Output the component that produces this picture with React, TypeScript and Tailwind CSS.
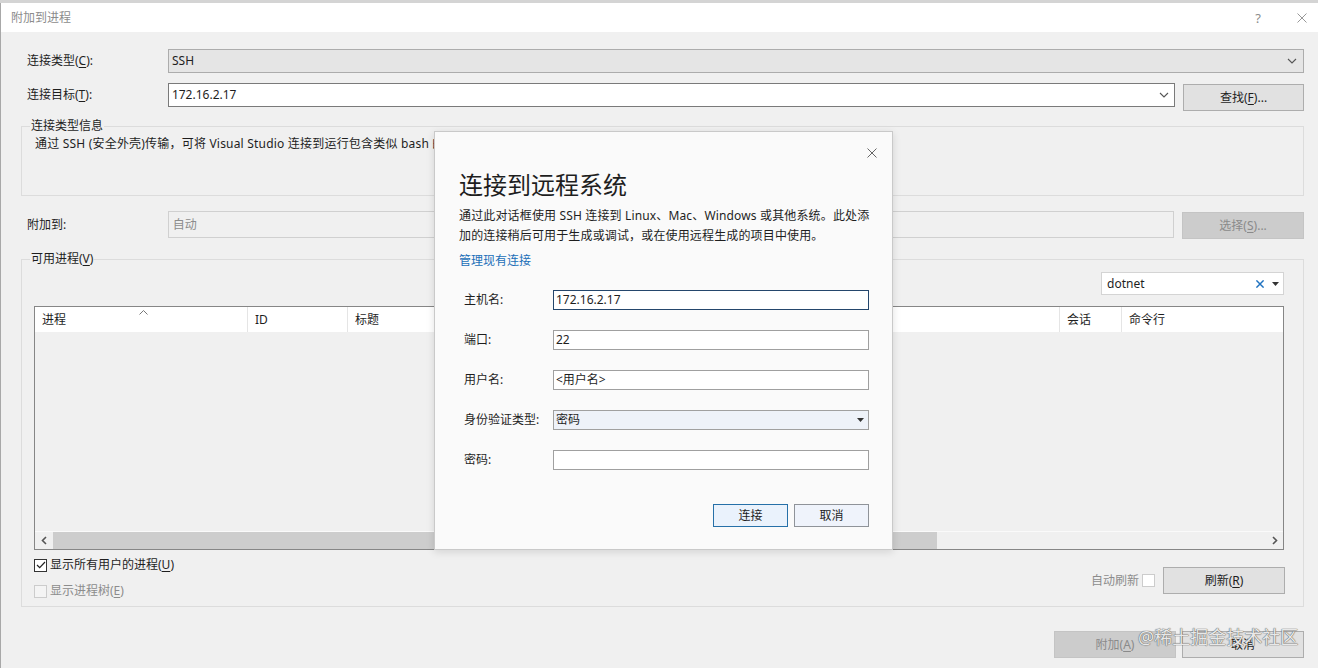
import React from "react";

// Access-key letter, underlined like a WinForms label
function K({ children }: { children: string }) {
  return <span className="underline underline-offset-[2px] decoration-[1px]">{children}</span>;
}

function ChevronDown({ color = "#555" }: { color?: string }) {
  return (
    <svg width="10" height="6" viewBox="0 0 10 6" fill="none" stroke={color} strokeWidth="1.1">
      <path d="M1 1l4 4 4-4" />
    </svg>
  );
}

function CaretDown() {
  return (
    <svg width="7" height="4" viewBox="0 0 7 4" fill="#333">
      <path d="M0 0h7L3.5 4z" />
    </svg>
  );
}

function Cross({ size = 10, color = "#555", width = 1 }: { size?: number; color?: string; width?: number }) {
  return (
    <svg width={size} height={size} viewBox="0 0 10 10" fill="none" stroke={color} strokeWidth={width}>
      <path d="M0.5 0.5l9 9M9.5 0.5l-9 9" />
    </svg>
  );
}

function WinButton({
  children,
  disabled = false,
  className = "",
}: {
  children: React.ReactNode;
  disabled?: boolean;
  className?: string;
}) {
  return (
    <div
      className={`flex items-center justify-center border ${
        disabled ? "bg-[#cccccc] border-[#c4c4c4] text-[#8a8a8a]" : "bg-[#e1e1e1] border-[#adadad] text-[#1e1e1e]"
      } ${className}`}
    >
      {children}
    </div>
  );
}

const columns = [
  { label: "进程", w: "w-[213px]" },
  { label: "ID", w: "w-[100px]" },
  { label: "标题", w: "w-[712px]" },
  { label: "会话", w: "w-[62px]" },
  { label: "命令行", w: "flex-1" },
];

function ConnectDialog() {
  const rows = [
    { label: "主机名:", value: "172.16.2.17", focus: true },
    { label: "端口:", value: "22" },
    { label: "用户名:", value: "<用户名>" },
    { label: "身份验证类型:", value: "密码", select: true },
    { label: "密码:", value: "" },
  ];
  return (
    <div className="absolute left-[434px] top-[131px] w-[459px] h-[419px] bg-[#fafafa] border border-[#c9c9c9] shadow-[0_2px_8px_rgba(0,0,0,0.12)] flex flex-col">
      <div className="flex justify-end pt-[16px] pr-[15px]">
        <Cross size={10} color="#666" width={1} />
      </div>
      <h1 className="mt-[11px] pl-[24px] text-[24px] leading-[32px] text-[#1e1e1e] font-normal">连接到远程系统</h1>
      <p className="mt-[5px] pl-[24px] text-[12px] leading-[20px] text-[#1e1e1e] whitespace-nowrap tracking-[0.15px]">
        通过此对话框使用 SSH 连接到 Linux、Mac、Windows 或其他系统。此处添
        <br />
        加的连接稍后可用于生成或调试，或在使用远程生成的项目中使用。
      </p>
      <div className="mt-[5px] pl-[24px] text-[12px] leading-[20px] text-[#1a6fb8]">管理现有连接</div>

      <div className="mt-[19px] flex flex-col gap-[20px] pl-[29px] pr-[23px]">
        {rows.map((r) => (
          <div key={r.label} className="flex items-center h-[20px]">
            <span className="w-[89px] text-[12px] text-[#1e1e1e]">{r.label}</span>
            <div
              className={`flex-1 h-[20px] flex items-center justify-between px-[2px] text-[12px] border ${
                r.focus
                  ? "bg-white border-[#24466c]"
                  : r.select
                  ? "bg-[#eef2f9] border-[#a0a0a0]"
                  : "bg-white border-[#a0a0a0]"
              }`}
            >
              <span className="text-[#1e1e1e]">{r.value}</span>
              {r.select && (
                <span className="mr-[2px]">
                  <CaretDown />
                </span>
              )}
            </div>
          </div>
        ))}
      </div>

      <div className="mt-[34px] flex justify-end gap-[6px] pr-[23px]">
        <div className="w-[75px] h-[23px] flex items-center justify-center bg-[#eaf2fc] border border-[#2670a8] text-[12px]">
          连接
        </div>
        <div className="w-[75px] h-[23px] flex items-center justify-center bg-[#eff3fb] border border-[#8f9399] text-[12px]">
          取消
        </div>
      </div>
    </div>
  );
}

export default function App() {
  return (
    <div className="relative w-[1318px] h-[668px] overflow-hidden bg-[#f0f0f0] text-[12px] leading-[16px] text-[#1e1e1e] font-['Segoe_UI','Noto_Sans','Noto_Sans_CJK_SC',sans-serif]">
      {/* editor behind the window */}
      <div className="h-[3px] bg-[#d4d4d4]" />

      {/* title bar */}
      <div className="h-[29px] bg-white flex items-center pl-[10px] pr-[11px] border-l border-[#a8a8a8]">
        <span className="text-[#8c8c8c]">附加到进程</span>
        <span className="ml-auto mr-[36px] text-[#8c8c8c] text-[13px]">?</span>
        <Cross size={10} color="#8c8c8c" width={0.9} />
      </div>

      <div className="h-[636px] border-l border-[#a8a8a8] pl-[26px] pr-[14px] pt-[17px]">
        {/* connection type */}
        <div className="flex items-center">
          <span className="w-[141px]">
            连接类型(<K>C</K>):
          </span>
          <div className="flex-1 h-[24px] bg-[#e5e5e5] border border-[#acacac] flex items-center justify-between pl-[3px] pr-[6px]">
            <span>SSH</span>
            <ChevronDown />
          </div>
        </div>

        {/* connection target */}
        <div className="mt-[10px] flex items-start">
          <span className="w-[141px] h-[24px] flex items-center">
            连接目标(<K>T</K>):
          </span>
          <div className="w-[1008px] h-[24px] bg-white border border-[#7a7a7a] flex items-center justify-between pl-[3px] pr-[5px]">
            <span>172.16.2.17</span>
            <ChevronDown />
          </div>
          <WinButton className="ml-[8px] mt-[1px] w-[121px] h-[27px]">
            查找(<K>F</K>)...
          </WinButton>
        </div>

        {/* connection type info */}
        <fieldset className="-ml-[6px] mt-[7px] h-[78px] border border-[#dcdcdc]">
          <legend className="ml-[8px] px-[1px]">连接类型信息</legend>
          <p className="pl-[13px] pt-[2px] whitespace-nowrap tracking-[0.2px]">
            通过 SSH (安全外壳)传输，可将 Visual Studio 连接到运行包含类似 bash 的 shell 的任何系统。
          </p>
        </fieldset>

        {/* attach to */}
        <div className="mt-[15px] flex items-start">
          <span className="w-[141px] h-[27px] flex items-center">附加到:</span>
          <div className="w-[1008px] h-[27px] bg-[#f0f0f0] border border-[#d0d0d0] flex items-center pl-[4px] text-[#8c8c8c]">
            自动
          </div>
          <WinButton disabled className="ml-[8px] mt-[1px] w-[122px] h-[27px]">
            选择(<K>S</K>)...
          </WinButton>
        </div>

        {/* available processes */}
        <fieldset className="-ml-[6px] mt-[12px] h-[356px] border border-[#dcdcdc]">
          <legend className="ml-[8px] px-[1px]">
            可用进程(<K>V</K>)
          </legend>

          <div className="pl-[12px] pr-[19px]">
            <div className="mt-[5px] flex justify-end">
              <div className="w-[183px] h-[23px] bg-white border border-[#d4d4d4] flex items-center pl-[5px] pr-[4px]">
                <span>dotnet</span>
                <span className="ml-auto mr-[8px]">
                  <Cross size={8} color="#1f72c0" width={1.8} />
                </span>
                <CaretDown />
              </div>
            </div>

            {/* table */}
            <div className="mt-[11px] h-[244px] border border-[#868686] bg-[#f0f0f0] flex flex-col">
              <div className="h-[25px] bg-white flex">
                {columns.map((c, i) => (
                  <div
                    key={c.label}
                    className={`${c.w} relative flex items-center pl-[7px] ${
                      i < columns.length - 1 ? "border-r border-[#e5e5e5]" : ""
                    }`}
                  >
                    {c.label}
                    {i === 0 && (
                      <svg className="absolute left-[104px] top-[3px]" width="9" height="5" viewBox="0 0 9 5" fill="none" stroke="#777" strokeWidth="1">
                        <path d="M0.5 4.5l4-4 4 4" />
                      </svg>
                    )}
                  </div>
                ))}
              </div>
              <div className="flex-1" />
              <div className="h-[1px] bg-[#fafafa]" />
              <div className="h-[17px] flex items-center">
                <div className="w-[18px] flex justify-center">
                  <svg width="6" height="9" viewBox="0 0 6 9" fill="none" stroke="#555" strokeWidth="1.6">
                    <path d="M5 1L1.5 4.5 5 8" />
                  </svg>
                </div>
                <div className="w-[884px] h-[17px] bg-[#cdcdcd]" />
                <div className="flex-1" />
                <div className="w-[17px] flex justify-center">
                  <svg width="6" height="9" viewBox="0 0 6 9" fill="none" stroke="#555" strokeWidth="1.6">
                    <path d="M1 1l3.5 3.5L1 8" />
                  </svg>
                </div>
              </div>
            </div>

            <div className="mt-[8px] flex justify-between items-start">
              <div className="flex flex-col gap-[12px]">
                <div className="h-[14px] flex items-center gap-[3px]">
                  <span className="w-[13px] h-[13px] bg-white border border-[#333] flex items-center justify-center">
                    <svg width="10" height="8" viewBox="0 0 10 8" fill="none" stroke="#222" strokeWidth="1.2">
                      <path d="M1 4l2.7 2.7L9 1" />
                    </svg>
                  </span>
                  <span>
                    显示所有用户的进程(<K>U</K>)
                  </span>
                </div>
                <div className="h-[14px] flex items-center gap-[3px] text-[#8c8c8c]">
                  <span className="w-[13px] h-[13px] bg-[#f4f4f4] border border-[#cccccc]" />
                  <span>
                    显示进程树(<K>E</K>)
                  </span>
                </div>
              </div>
              <div className="mt-[9px] h-[27px] flex items-center">
                <span className="text-[#8c8c8c]">自动刷新</span>
                <span className="ml-[3px] w-[13px] h-[13px] bg-white border border-[#cccccc]" />
                <WinButton className="ml-[8px] w-[122px] h-[27px] mr-[-1px]">
                  刷新(<K>R</K>)
                </WinButton>
              </div>
            </div>
          </div>
        </fieldset>

        {/* dialog buttons */}
        <div className="mt-[24px] flex justify-end gap-[6px]">
          <WinButton disabled className="w-[122px] h-[27px]">
            附加(<K>A</K>)
          </WinButton>
          <WinButton className="w-[122px] h-[27px]">取消</WinButton>
        </div>
      </div>

      <ConnectDialog />

      {/* site watermark over the screenshot */}
      <div className="absolute left-[1138px] top-[626px] text-[18px] leading-[22px] text-[#e8e8e8] [text-shadow:0_0_1px_#555,0_0_1px_#555] whitespace-nowrap">
        @稀土掘金技术社区
      </div>
    </div>
  );
}
